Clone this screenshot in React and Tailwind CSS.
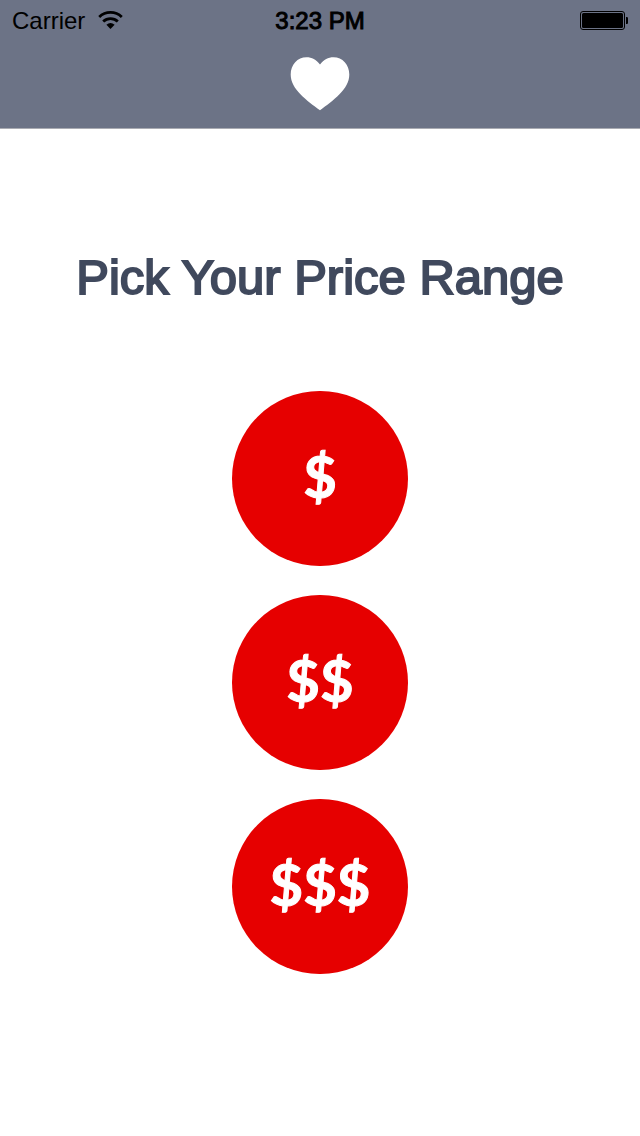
function StatusBar() {
  return (
    <div className="grid h-[42px] grid-cols-3 items-center px-3 text-2xl text-black">
      <div className="flex items-center gap-3">
        <span>Carrier</span>
        <svg className="h-5 w-7" viewBox="0 0 28 20" fill="none" stroke="black" strokeWidth="2.8" aria-label="Wi-Fi">
          <path d="M2.2 6 A16.2 16.2 0 0 1 24.8 6" />
          <path d="M6.2 10.6 A10.6 10.6 0 0 1 20.8 10.6" />
          <path d="M9.4 13.8 A6.4 6.4 0 0 1 17.6 13.8 L13.5 18 Z" fill="black" stroke="none" />
        </svg>
      </div>
      <span className="text-center [-webkit-text-stroke:1px_black]">3:23 PM</span>
      <svg className="h-5 w-12 justify-self-end" viewBox="0 0 48 20" aria-label="Battery full">
        <rect x="0.5" y="0.5" width="44" height="18" rx="2.5" fill="none" stroke="black" />
        <rect x="2" y="2" width="41" height="15" rx="1.5" fill="black" />
        <path d="M46 6 h1 q2 1 2 3.5 t-2 3.5 h-1 z" fill="black" />
      </svg>
    </div>
  );
}

function PriceButton({ label, name }) {
  return (
    <button
      type="button"
      aria-label={name}
      className="flex h-[175px] w-44 items-center justify-center rounded-full bg-[#e60000] pb-1.5 font-['Lato',sans-serif] text-[58px] leading-none font-bold text-white [-webkit-text-stroke:1px_white]"
    >
      {label}
    </button>
  );
}

export default function App() {
  return (
    <div className="min-h-screen bg-white font-['Liberation_Sans',Arial,sans-serif]">
      <header className="h-[129px] border-b border-[#a9abb2] bg-[#6c7386]">
        <StatusBar />
        <div className="flex justify-center pt-[14px]">
          <svg className="h-14 w-15" viewBox="0 0 60 56" fill="white" aria-label="Favorites">
            <path d="M30 8.5 C34 3.5 38 1.2 43.5 1.2 C52.5 1.2 59.3 8.5 59.3 18.5 C59.3 33.5 43 44.5 30 54.3 C17 44.5 0.7 33.5 0.7 18.5 C0.7 8.5 7.5 1.2 16.5 1.2 C22 1.2 26 3.5 30 8.5 Z" />
          </svg>
        </div>
      </header>
      <main className="flex flex-col items-center pt-30 pb-10">
        <h1 className="text-[49px] leading-14 text-[#40495d] [-webkit-text-stroke:2px_#40495d]">
          Pick Your Price Range
        </h1>
        <div className="mt-[86px] flex flex-col gap-[29px]">
          <PriceButton label="$" name="$ price range" />
          <PriceButton label="$$" name="$$ price range" />
          <PriceButton label="$$$" name="$$$ price range" />
        </div>
      </main>
    </div>
  );
}
